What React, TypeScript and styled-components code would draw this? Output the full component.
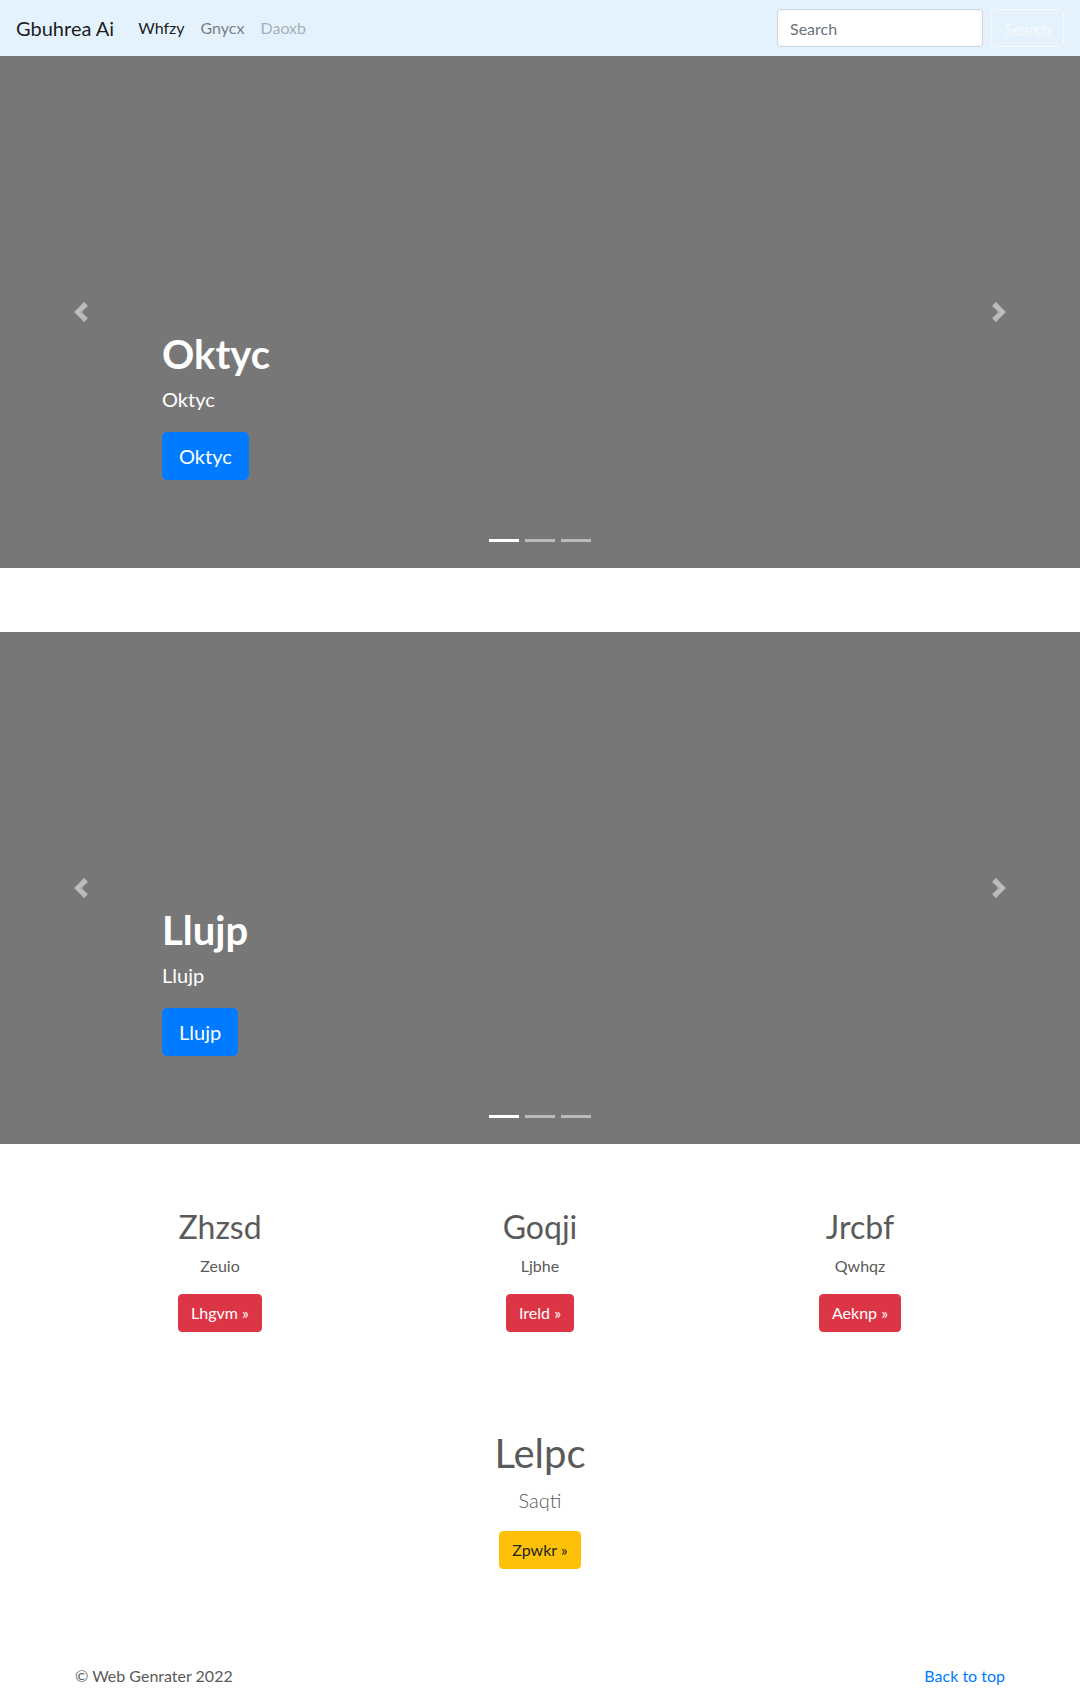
import React from "react";
import styled, { createGlobalStyle } from "styled-components";

const Global = createGlobalStyle`
  * { box-sizing: border-box; }
  body {
    margin: 0;
    font-family: Lato, "Open Sans", "Liberation Sans", sans-serif;
    font-size: 16px;
    line-height: 1.5;
    color: #5a5a5a;
    background: #fff;
  }
`;

const Navbar = styled.nav`
  height: 56px;
  background: #e3f2fd;
  padding: 8px 16px;
  display: flex;
  align-items: center;
  justify-content: space-between;
`;

const Left = styled.div`
  display: flex;
  align-items: center;
`;

const Brand = styled.a`
  font-size: 20px;
  line-height: 30px;
  padding: 5px 0;
  margin-right: 16px;
  color: rgba(0, 0, 0, 0.9);
  text-decoration: none;
`;

const NavList = styled.div`
  display: flex;
`;

const NavLink = styled.a<{ $state: "active" | "normal" | "disabled" }>`
  padding: 8px 8px;
  font-size: 16px;
  line-height: 24px;
  text-decoration: none;
  color: ${(p) =>
    p.$state === "active"
      ? "rgba(0,0,0,0.9)"
      : p.$state === "disabled"
      ? "rgba(0,0,0,0.3)"
      : "rgba(0,0,0,0.5)"};
`;

const SearchForm = styled.form`
  display: flex;
  align-items: center;
  gap: 8px;
  margin: 0;
`;

const SearchInput = styled.input`
  width: 206px;
  height: 38px;
  padding: 6px 12px;
  font-family: inherit;
  font-size: 16px;
  color: #495057;
  background: #fff;
  border: 1px solid #ced4da;
  border-radius: 4px;
  &::placeholder {
    color: #6c757d;
  }
`;

const OutlineButton = styled.button`
  height: 38px;
  width: 73px;
  padding: 6px 12px;
  font-family: inherit;
  font-size: 16px;
  color: #f8f9fa;
  background: transparent;
  border: 1px solid #f8f9fa;
  border-radius: 4px;
`;

const Carousel = styled.section`
  position: relative;
  height: 512px;
  background: #777;
  margin-bottom: 64px;
`;

const Caption = styled.div`
  position: absolute;
  left: 15%;
  right: 15%;
  bottom: 48px;
  padding: 20px 0;
  color: #fff;
  text-align: left;
  display: flex;
  flex-direction: column;
  align-items: flex-start;
`;

const CaptionTitle = styled.h1`
  margin: 0 0 6px;
  font-size: 40px;
  line-height: 48px;
  font-weight: 700;
`;

const CaptionText = styled.p`
  margin: 0 0 18px;
  font-size: 20px;
  line-height: 30px;
`;

const BigButton = styled.a`
  display: inline-block;
  margin-bottom: 20px;
  height: 48px;
  padding: 8px 16px;
  font-size: 20px;
  line-height: 30px;
  color: #fff;
  background: #007bff;
  border: 1px solid #007bff;
  border-radius: 4.8px;
  text-decoration: none;
`;

const Control = styled.a<{ $side: "left" | "right" }>`
  position: absolute;
  top: 0;
  bottom: 0;
  ${(p) => (p.$side === "left" ? "left: 0;" : "right: 0;")}
  width: 15%;
  display: flex;
  align-items: center;
  justify-content: center;
  opacity: 0.5;
`;

const Indicators = styled.ol`
  position: absolute;
  left: 0;
  right: 0;
  bottom: 0;
  margin: 0 0 16px;
  padding: 0;
  list-style: none;
  display: flex;
  justify-content: center;
`;

const Indicator = styled.li<{ $active?: boolean }>`
  width: 30px;
  height: 23px;
  margin: 0 3px;
  border-top: 10px solid transparent;
  border-bottom: 10px solid transparent;
  background: #fff;
  background-clip: padding-box;
  opacity: ${(p) => (p.$active ? 1 : 0.5)};
`;

const Container = styled.div`
  width: 960px;
  margin: 0 auto;
  padding: 0 15px;
`;

const Row = styled.div`
  display: grid;
  grid-template-columns: repeat(3, 1fr);
  margin: 0 -15px;
`;

const Col = styled.div`
  padding: 0 15px;
  text-align: center;
`;

const ColTitle = styled.h2`
  margin: 0 0 8px;
  font-size: 32px;
  line-height: 38.4px;
  font-weight: 400;
`;

const ColText = styled.p`
  margin: 0 12px 16px;
`;

const Btn = styled.a<{ $variant: "danger" | "warning" }>`
  display: inline-block;
  height: 38px;
  padding: 6px 12px;
  font-size: 16px;
  line-height: 24px;
  border-radius: 4px;
  text-decoration: none;
  border: 1px solid ${(p) => (p.$variant === "danger" ? "#dc3545" : "#ffc107")};
  background: ${(p) => (p.$variant === "danger" ? "#dc3545" : "#ffc107")};
  color: ${(p) => (p.$variant === "danger" ? "#fff" : "#212529")};
`;

const BtnHolder = styled.p`
  margin: 0 0 16px;
`;

const Feature = styled.section`
  margin-top: 81px;
  text-align: center;
`;

const FeatureTitle = styled.h2`
  margin: 0 0 8px;
  font-size: 40px;
  line-height: 48px;
  font-weight: 400;
`;

const Lead = styled.p`
  margin: 0 0 16px;
  font-size: 20px;
  line-height: 30px;
  font-weight: 300;
`;

const Footer = styled.footer`
  width: 960px;
  margin: 95px auto 0;
  padding: 0 15px;
  display: flex;
  justify-content: space-between;
`;

const FooterText = styled.p`
  margin: 0 0 16px;
`;

const FooterLink = styled.a`
  color: #007bff;
  text-decoration: none;
`;

const Chevron = ({ dir }: { dir: "left" | "right" }) => (
  <svg width="20" height="20" viewBox="0 0 8 8" fill="#fff">
    {dir === "left" ? (
      <path d="M5.25 0l-4 4 4 4 1.5-1.5L4.25 4l2.5-2.5L5.25 0z" />
    ) : (
      <path d="M2.75 0l-1.5 1.5L3.75 4l-2.5 2.5L2.75 8l4-4-4-4z" />
    )}
  </svg>
);

const Slide = ({ title }: { title: string }) => (
  <Carousel>
    <Indicators>
      <Indicator $active />
      <Indicator />
      <Indicator />
    </Indicators>
    <Caption>
      <CaptionTitle>{title}</CaptionTitle>
      <CaptionText>{title}</CaptionText>
      <BigButton href="#">{title}</BigButton>
    </Caption>
    <Control $side="left" href="#">
      <Chevron dir="left" />
    </Control>
    <Control $side="right" href="#">
      <Chevron dir="right" />
    </Control>
  </Carousel>
);

const cols = [
  { t: "Zhzsd", p: "Zeuio", b: "Lhgvm" },
  { t: "Goqji", p: "Ljbhe", b: "Ireld" },
  { t: "Jrcbf", p: "Qwhqz", b: "Aeknp" },
];

export default function App() {
  return (
    <>
      <Global />
      <Navbar>
        <Left>
          <Brand href="#">Gbuhrea Ai</Brand>
          <NavList>
            <NavLink $state="active" href="#">Whfzy</NavLink>
            <NavLink $state="normal" href="#">Gnycx</NavLink>
            <NavLink $state="disabled" href="#">Daoxb</NavLink>
          </NavList>
        </Left>
        <SearchForm onSubmit={(e) => e.preventDefault()}>
          <SearchInput placeholder="Search" />
          <OutlineButton type="submit">Search</OutlineButton>
        </SearchForm>
      </Navbar>
      <Slide title="Oktyc" />
      <Slide title="Llujp" />
      <Container>
        <Row>
          {cols.map((c) => (
            <Col key={c.t}>
              <ColTitle>{c.t}</ColTitle>
              <ColText>{c.p}</ColText>
              <BtnHolder>
                <Btn $variant="danger" href="#">
                  {c.b} »
                </Btn>
              </BtnHolder>
            </Col>
          ))}
        </Row>
        <Feature>
          <FeatureTitle>Lelpc</FeatureTitle>
          <Lead>Saqti</Lead>
          <BtnHolder>
            <Btn $variant="warning" href="#">
              Zpwkr »
            </Btn>
          </BtnHolder>
        </Feature>
      </Container>
      <Footer>
        <FooterText>© Web Genrater 2022</FooterText>
        <FooterText>
          <FooterLink href="#">Back to top</FooterLink>
        </FooterText>
      </Footer>
    </>
  );
}
